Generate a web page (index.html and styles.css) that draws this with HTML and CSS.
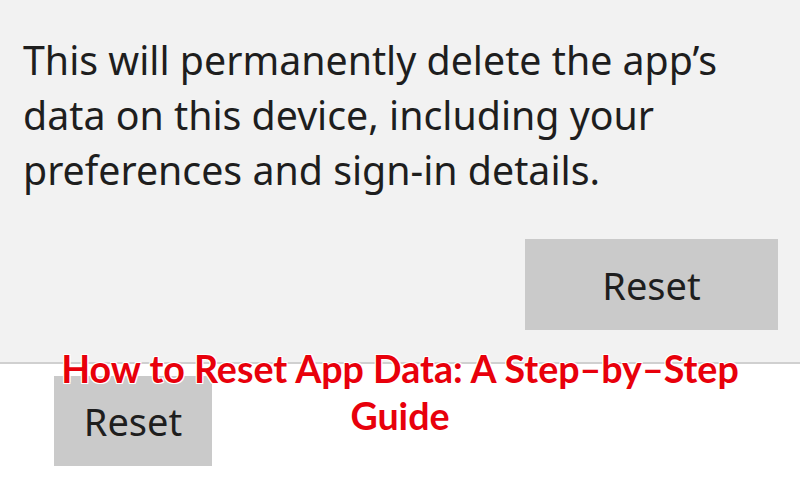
FILE: index.html
```html
<!DOCTYPE html>
<html>
<head>
<meta charset="utf-8">
<link rel="stylesheet" href="styles.css">
</head>
<body>
<div class="page">
  <section class="panel">
    <p class="message">This will permanently delete the app’s data on this device, including your preferences and sign-in details.</p>
    <div class="actions">
      <button class="btn btn-large">Reset</button>
    </div>
  </section>
  <section class="lower">
    <button class="btn btn-small">Reset</button>
  </section>
  <h1 class="title">How to Reset App Data: A Step–by–Step Guide</h1>
</div>
</body>
</html>
```
FILE: styles.css
```css
html, body {
  margin: 0;
  padding: 0;
  background: #ffffff;
}
.page {
  position: relative;
  width: 800px;
  height: 478px;
  overflow: hidden;
  font-family: "Noto Sans", "Open Sans", sans-serif;
}
.panel {
  height: 364px;
  box-sizing: border-box;
  background: #f2f2f2;
  border-bottom: 2px solid #d0d0d0;
  padding: 33px 22px 0 23px;
}
.message {
  margin: 0;
  width: 740px;
  font-size: 39.3px;
  line-height: 55px;
  color: #1e1e1e;
}
.actions {
  display: flex;
  justify-content: flex-end;
  margin-top: 41px;
}
.btn {
  border: none;
  background: #cacaca;
  color: #1e1e1e;
  font-family: "Noto Sans", "Open Sans", sans-serif;
  padding: 0;
}
.btn-large {
  width: 253px;
  height: 91px;
  font-size: 38px;
}
.lower {
  padding: 12px 0 0 54px;
}
.btn-small {
  width: 158px;
  height: 90px;
  font-size: 38px;
}
.title {
  position: absolute;
  left: 0;
  right: 0;
  top: 345px;
  margin: 0;
  text-align: center;
  font-family: "Lato", sans-serif;
  font-weight: 700;
  font-size: 37.6px;
  line-height: 47px;
  color: #e8000b;
  text-shadow: 0 0 2px #fff, 1px 1px 0 #fff, -1px -1px 0 #fff, 1px -1px 0 #fff, -1px 1px 0 #fff;
  padding: 0 30px;
}
```
